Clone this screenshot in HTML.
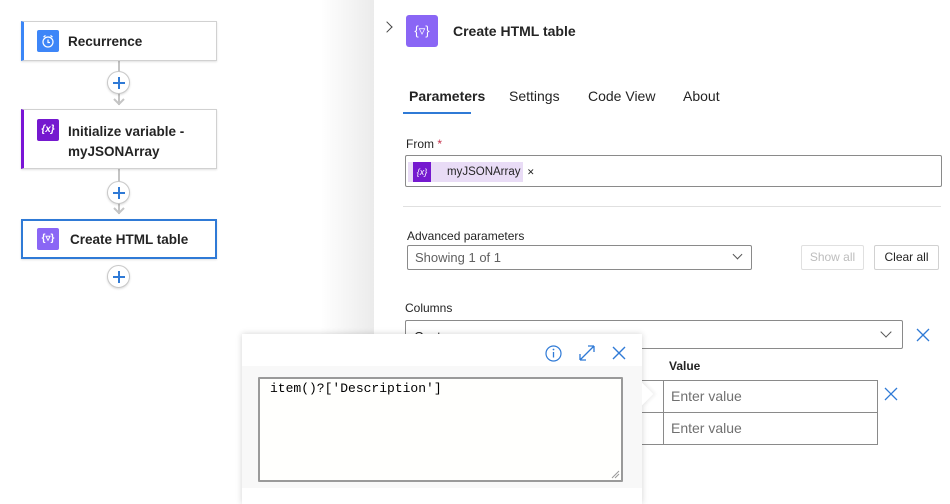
<!DOCTYPE html>
<html><head><meta charset="utf-8"><style>
*{box-sizing:border-box;margin:0;padding:0}
body{width:950px;height:500px;overflow:hidden;background:#fff;font-family:"Liberation Sans",sans-serif;position:relative;color:#242424}
.a{position:absolute;white-space:nowrap}
.card{position:absolute;left:21px;width:196px;background:#fff;border:1px solid #d1d1d1;box-shadow:0 1px 2px rgba(0,0,0,.12);font-weight:bold;font-size:13.5px}
.ic{position:absolute;width:22px;height:22px;border-radius:2px;color:#fff;font-size:10px;text-align:center;line-height:22px}
.plus{position:absolute;width:23px;height:23px;border-radius:50%;border:1px solid #c8c8c8;background:#fff;box-shadow:0 1px 2px rgba(0,0,0,.15)}
.plus:before{content:"";position:absolute;left:5px;top:10px;width:12px;height:1.5px;background:#2f7ad6}
.plus:after{content:"";position:absolute;left:10.3px;top:4.5px;width:1.5px;height:12px;background:#2f7ad6}
.vl{position:absolute;left:118px;width:2px;background:#c4c4c4}
.box{position:absolute;border:1px solid #8a8a8a;border-radius:2px;background:#fff}
.lbl{position:absolute;font-size:12px;color:#242424}
</style></head><body>
<div class="a" style="left:0;top:0;width:374px;height:500px;background:#fff"></div>
<div class="a" style="left:320px;top:0;width:54px;height:500px;background:linear-gradient(90deg,rgba(0,0,0,0),rgba(0,0,0,.08))"></div>

<!-- flow -->
<div class="vl" style="top:60px;height:45px"></div>
<div class="vl" style="top:169px;height:45px"></div>
<svg class="a" style="left:113px;top:97px" width="12" height="10"><path d="M1 2l5 5 5-5" fill="none" stroke="#c4c4c4" stroke-width="2"/></svg>
<svg class="a" style="left:113px;top:206px" width="12" height="10"><path d="M1 2l5 5 5-5" fill="none" stroke="#c4c4c4" stroke-width="2"/></svg>
<div class="card" style="top:21px;height:40px;border-left:3px solid #3b86f7"><div class="ic" style="left:13px;top:8px;background:#3d86f8"><svg width="22" height="22"><circle cx="11" cy="12" r="5" fill="none" stroke="#fff" stroke-width="1.2"/><path d="M11 9.5v3h2M6.5 7l2-1.5M15.5 7l-2-1.5" fill="none" stroke="#fff" stroke-width="1.2"/></svg></div><div class="a" style="left:44px;top:12px">Recurrence</div></div>
<div class="plus" style="left:107px;top:71px"></div>
<div class="card" style="top:109px;height:60px;border-left:3px solid #7a14d6"><div class="ic" style="left:13px;top:9px;background:#7519cf;font-style:italic">{x}</div><div class="a" style="left:44px;top:12px;line-height:20px">Initialize variable -<br>myJSONArray</div></div>
<div class="plus" style="left:107px;top:181px"></div>
<div class="card" style="top:219px;height:40px;border:2px solid #2f7ad6"><div class="ic" style="left:14px;top:7px;background:#8a66f5">{▿}</div><div class="a" style="left:47px;top:11px">Create HTML table</div></div>
<div class="plus" style="left:107px;top:265px"></div>

<!-- panel -->
<div class="a" style="left:374px;top:0;width:576px;height:500px;background:#fff"></div>
<div class="a" style="left:383px;top:23px;width:8px;height:8px;border-right:1.5px solid #444;border-top:1.5px solid #444;transform:rotate(45deg)"></div>
<div class="a" style="left:406px;top:15px;width:32px;height:32px;border-radius:3px;background:#8a66f5;color:#fff;font-size:13px;text-align:center;line-height:32px">{▿}</div>
<div class="a" style="left:453px;top:23px;font-size:14px;font-weight:bold">Create HTML table</div>
<div class="a" style="left:409px;top:88px;font-size:14px;font-weight:bold">Parameters</div>
<div class="a" style="left:403px;top:112px;width:68px;height:2px;background:#2f7ad6"></div>
<div class="a" style="left:509px;top:88px;font-size:14px">Settings</div>
<div class="a" style="left:588px;top:88px;font-size:14px">Code View</div>
<div class="a" style="left:683px;top:88px;font-size:14px">About</div>
<div class="lbl" style="left:406px;top:137px">From <span style="color:#c4314b">*</span></div>
<div class="box" style="left:405px;top:155px;width:537px;height:32px"></div>
<div class="a" style="left:408px;top:162px;width:115px;height:20px;background:#e9dcf6;font-size:12px"><div class="a" style="left:5px;top:0;width:18px;height:20px;background:#7519cf;color:#fff;font-size:9px;line-height:20px;text-align:center;font-style:italic">{x}</div><div class="a" style="left:39px;top:4px;font-size:11.5px">myJSONArray<span style="position:absolute;left:80px;top:1px;font-size:9px">✕</span></div></div>
<div class="a" style="left:403px;top:206px;width:538px;height:1px;background:#e0e0e0"></div>
<div class="lbl" style="left:407px;top:229px">Advanced parameters</div>
<div class="box" style="left:407px;top:245px;width:345px;height:25px;font-size:13px;color:#616161;padding:4px 7px">Showing 1 of 1</div>
<div class="a" style="left:734px;top:251px;width:7px;height:7px;border-right:1px solid #555;border-bottom:1px solid #555;transform:rotate(45deg)"></div>
<div class="box" style="left:801px;top:245px;width:63px;height:25px;border-color:#e0e0e0;color:#bdbdbd;font-size:12px;text-align:center;line-height:23px">Show all</div>
<div class="box" style="left:874px;top:245px;width:65px;height:25px;border-color:#d1d1d1;font-size:12px;text-align:center;line-height:23px">Clear all</div>
<div class="lbl" style="left:405px;top:301px">Columns</div>
<div class="box" style="left:405px;top:320px;width:498px;height:29px;font-size:13px;padding:8px 8px">Custom</div>
<div class="a" style="left:882px;top:328px;width:8px;height:8px;border-right:1px solid #555;border-bottom:1px solid #555;transform:rotate(45deg)"></div>
<svg class="a" style="left:916px;top:328px" width="14" height="14"><path d="M1 1L13 13M13 1L1 13" stroke="#2f7ad6" stroke-width="1.3"/></svg>
<div class="a" style="left:669px;top:359px;font-size:12px;font-weight:bold">Value</div>
<div class="a" style="left:600px;top:380px;width:64px;height:65px;border:1px solid #8a8a8a;border-right:none"></div>
<div class="a" style="left:600px;top:412px;width:64px;height:1px;background:#8a8a8a"></div>
<div class="box" style="left:663px;top:380px;width:215px;height:33px;border-radius:0;font-size:14px;color:#707070;padding:7px 7px">Enter value</div>
<div class="box" style="left:663px;top:412px;width:215px;height:33px;border-radius:0;font-size:14px;color:#707070;padding:7px 7px">Enter value</div>
<svg class="a" style="left:884px;top:387px" width="14" height="14"><path d="M1 1L13 13M13 1L1 13" stroke="#2f7ad6" stroke-width="1.3"/></svg>

<!-- popup -->
<div class="a" style="left:242px;top:334px;width:400px;height:170px;background:#fff;box-shadow:0 0 6px rgba(0,0,0,.18)"></div>
<div class="a" style="left:634px;top:386px;width:16px;height:16px;background:#fff;transform:rotate(45deg);box-shadow:2px -2px 3px rgba(0,0,0,.06)"></div>
<div class="a" style="left:242px;top:366px;width:400px;height:122px;background:#f8f8f8"></div>
<svg class="a" style="left:544px;top:344px" width="90" height="20" viewBox="0 0 90 20">
<circle cx="9.5" cy="9.5" r="7.5" fill="none" stroke="#2f7ad6" stroke-width="1.2"/><line x1="9.5" y1="8" x2="9.5" y2="13.5" stroke="#2f7ad6" stroke-width="1.3"/><circle cx="9.5" cy="5.5" r=".9" fill="#2f7ad6"/>
<path d="M36 16L50 2M36 16v-6M36 16h6M50 2h-6M50 2v6" fill="none" stroke="#2f7ad6" stroke-width="1.3"/>
<path d="M69 3L81 15M81 3L69 15" stroke="#2f7ad6" stroke-width="1.4"/>
</svg>
<div class="a" style="left:258px;top:377px;width:365px;height:105px;background:#fffffd;border:2px solid #9a9a9a;border-radius:1px"></div>
<div class="a" style="left:270px;top:381px;font-family:'Liberation Mono',monospace;font-size:13px;color:#000">item()?['Description']</div>
<svg class="a" style="left:610px;top:469px" width="10" height="10"><path d="M2 9L9 2M5 9L9 5" stroke="#999" stroke-width="1"/></svg>
</body></html>
